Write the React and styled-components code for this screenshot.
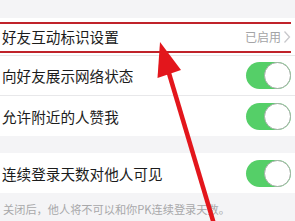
import React from 'react';
import styled, { createGlobalStyle } from 'styled-components';

const GlobalStyle = createGlobalStyle`
  html, body {
    margin: 0;
    padding: 0;
    background: #f4f4f6;
    font-family: "Noto Sans CJK SC", "Noto Sans", sans-serif;
  }
`;

const Page = styled.div`
  position: relative;
  width: 295px;
  height: 221px;
  overflow: hidden;
  background: #f4f4f6;
  padding-top: 18px;
  box-sizing: border-box;
`;

const Group = styled.div`
  background: #fff;
  margin-bottom: ${p => p.gap || 0}px;
`;

const Row = styled.div`
  display: flex;
  align-items: center;
  justify-content: space-between;
  height: ${p => p.h || 40}px;
  padding: 0 4px 0 2px;
  border-bottom: ${p => (p.last ? 'none' : '1px solid #e8e8ea')};
  box-sizing: border-box;
`;

const Label = styled.span`
  font-size: 14.6px;
  color: #1c1c1c;
`;

const Value = styled.span`
  display: flex;
  align-items: center;
  gap: 2px;
  font-size: 12px;
  color: #a4a4a6;
`;

const Toggle = styled.div`
  position: relative;
  width: 45px;
  height: 27px;
  border-radius: 14px;
  background: #55cf68;
  flex-shrink: 0;
  &::after {
    content: '';
    position: absolute;
    right: 0;
    top: 0;
    width: 27px;
    height: 27px;
    border-radius: 50%;
    background: #fff;
    box-sizing: border-box;
    border: 1.5px solid #a3ada5;
  }
`;

const Note = styled.div`
  padding: 8px 0 0 3px;
  font-size: 11.2px;
  color: #a8a8aa;
`;

const Marker = styled.div`
  position: absolute;
  left: 0;
  width: 291px;
  height: 2px;
  background: #c0232a;
  top: ${p => p.top}px;
`;

const Overlay = styled.svg`
  position: absolute;
  left: 0;
  top: 0;
`;

function Chevron() {
  return (
    <svg width="8" height="14" viewBox="0 0 8 14">
      <path d="M1.5 1.5 L6.5 7 L1.5 12.5" fill="none" stroke="#c8c8cc" strokeWidth="1.3" />
    </svg>
  );
}

export default function App() {
  return (
    <Page>
      <GlobalStyle />
      <Group gap={17}>
        <Row h={38}>
          <Label>好友互动标识设置</Label>
          <Value>
            已启用
            <Chevron />
          </Value>
        </Row>
        <Row>
          <Label>向好友展示网络状态</Label>
          <Toggle />
        </Row>
        <Row last>
          <Label>允许附近的人赞我</Label>
          <Toggle />
        </Row>
      </Group>
      <Group>
        <Row last>
          <Label>连续登录天数对他人可见</Label>
          <Toggle />
        </Row>
      </Group>
      <Note>关闭后，他人将不可以和你PK连续登录天数。</Note>

      <Marker top={22} />
      <Marker top={51} />
      <Overlay width="295" height="221" viewBox="0 0 295 221">
        <line x1="168" y1="70" x2="214" y2="224" stroke="#e3161c" strokeWidth="4.5" />
        <polygon points="160,42 157.5,78 181,70" fill="#e3161c" />
      </Overlay>
    </Page>
  );
}
